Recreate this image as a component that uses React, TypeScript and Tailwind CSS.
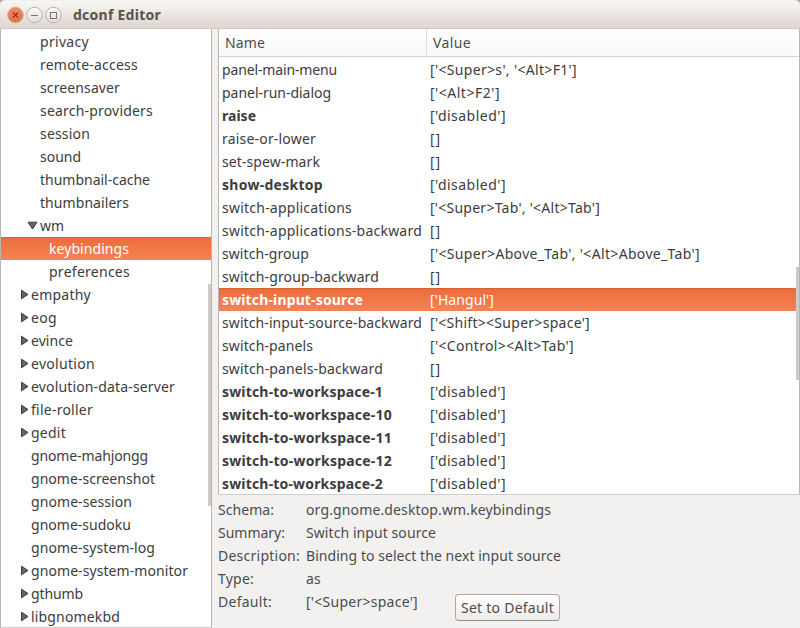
import { useLayoutEffect, useRef, useState } from "react";

/** Text tracked so that it takes exactly `w` pixels. */
function Label({ text, w }: { text: string; w: number }) {
  const ref = useRef<HTMLSpanElement>(null);
  const [spacing, setSpacing] = useState(0);
  useLayoutEffect(() => {
    if (!ref.current) return;
    const natural = ref.current.getBoundingClientRect().width - spacing * text.length;
    setSpacing((w - natural) / text.length);
  }, [text, w]);
  return (
    <span ref={ref} className="inline-block whitespace-pre" style={{ letterSpacing: `${spacing}px` }}>
      {text}
    </span>
  );
}

type Arrow = "open" | "closed" | "";

const tree: [string, number, number, Arrow][] = [
  ["privacy", 49, 3, ""],
  ["remote-access", 98, 3, ""],
  ["screensaver", 80, 3, ""],
  ["search-providers", 113, 3, ""],
  ["session", 50, 3, ""],
  ["sound", 41, 3, ""],
  ["thumbnail-cache", 110, 3, ""],
  ["thumbnailers", 89, 3, ""],
  ["wm", 24, 3, "open"],
  ["keybindings", 80, 4, ""],
  ["preferences", 81, 4, ""],
  ["empathy", 60, 2, "closed"],
  ["eog", 26, 2, "closed"],
  ["evince", 42, 2, "closed"],
  ["evolution", 64, 2, "closed"],
  ["evolution-data-server", 144, 2, "closed"],
  ["file-roller", 62, 2, "closed"],
  ["gedit", 35, 2, "closed"],
  ["gnome-mahjongg", 117, 2, ""],
  ["gnome-screenshot", 124, 2, ""],
  ["gnome-session", 101, 2, ""],
  ["gnome-sudoku", 100, 2, ""],
  ["gnome-system-log", 124, 2, ""],
  ["gnome-system-monitor", 157, 2, "closed"],
  ["gthumb", 52, 2, "closed"],
  ["libgnomekbd", 89, 2, "closed"],
];

const keys: [string, number, string, number, boolean?][] = [
  ["panel-main-menu", 115, "['<Super>s', '<Alt>F1']", 147],
  ["panel-run-dialog", 109, "['<Alt>F2']", 70],
  ["raise", 34, "['disabled']", 76, true],
  ["raise-or-lower", 94, "[]", 11],
  ["set-spew-mark", 98, "[]", 11],
  ["show-desktop", 101, "['disabled']", 76, true],
  ["switch-applications", 130, "['<Super>Tab', '<Alt>Tab']", 170],
  ["switch-applications-backward", 200, "[]", 11],
  ["switch-group", 87, "['<Super>Above_Tab', '<Alt>Above_Tab']", 270],
  ["switch-group-backward", 157, "[]", 11],
  ["switch-input-source", 141, "['Hangul']", 64, true],
  ["switch-input-source-backward", 200, "['<Shift><Super>space']", 160],
  ["switch-panels", 91, "['<Control><Alt>Tab']", 144],
  ["switch-panels-backward", 161, "[]", 11],
  ["switch-to-workspace-1", 161, "['disabled']", 76, true],
  ["switch-to-workspace-10", 170, "['disabled']", 76, true],
  ["switch-to-workspace-11", 170, "['disabled']", 76, true],
  ["switch-to-workspace-12", 170, "['disabled']", 76, true],
  ["switch-to-workspace-2", 161, "['disabled']", 76, true],
];

const details: [string, number, string, number][] = [
  ["Schema:", 56, "org.gnome.desktop.wm.keybindings", 245],
  ["Summary:", 67, "Switch input source", 130],
  ["Description:", 82, "Binding to select the next input source", 255],
  ["Type:", 36, "as", 15],
  ["Default:", 54, "['<Super>space']", 112],
];

const selected = "bg-linear-to-b from-[#ea6c3a] to-[#f68356] text-white shadow-[inset_0_1px_0_#d9622f]";

function Expander({ kind }: { kind: Arrow }) {
  if (kind === "open")
    return (
      <svg className="mr-[2px] h-[9px] w-[11px]" viewBox="0 0 11 9">
        <path d="M1 1.2H10L5.5 8Z" fill="#666" stroke="#3c3c3c" />
      </svg>
    );
  return (
    <svg className="mr-[2px] h-[11px] w-[9px]" viewBox="0 0 9 11">
      <path d="M1.5 1.2V9.8L8 5.5Z" fill="#666" stroke="#3c3c3c" />
    </svg>
  );
}

function TreeRow({ name, w, level, arrow }: { name: string; w: number; level: number; arrow: Arrow }) {
  const pad = level === 2 ? "pl-[30px]" : level === 3 ? "pl-[39px]" : "pl-[48px]";
  const arrowPad = level === 2 ? "pl-[19px]" : "pl-[26px]";
  return (
    <div className={`flex h-[23px] shrink-0 items-center ${arrow ? arrowPad : pad} ${name === "keybindings" ? selected : ""}`}>
      {arrow && <Expander kind={arrow} />}
      <Label text={name} w={w} />
    </div>
  );
}

export default function App() {
  return (
    <div className="flex h-[628px] w-[800px] flex-col overflow-hidden bg-[#f2f1f0] font-['Noto_Sans','Open_Sans',sans-serif] text-[14px] leading-[23px] text-[#3c3c3c]">
      <div className="h-[29px] shrink-0 bg-[#b3aaa7]">
        <header className="flex h-[29px] items-center rounded-t-[5px] border-t border-b border-t-[#f2f0ed] border-b-[#cdc7c0] bg-linear-to-b from-[#f8f7f5] to-[#ded6cf] pl-[7px]">
          <svg className="h-[18px] w-[56px]" viewBox="0 0 56 18" fill="none">
            <defs>
              <linearGradient id="close" x2="0" y2="1">
                <stop stopColor="#f68b64" />
                <stop offset="1" stopColor="#ed6b3e" />
              </linearGradient>
              <linearGradient id="plain" x2="0" y2="1">
                <stop stopColor="#fbfaf9" />
                <stop offset="1" stopColor="#e3ddd8" />
              </linearGradient>
            </defs>
            <circle cx="8.5" cy="9" r="7.8" fill="url(#close)" stroke="#c8aea2" />
            <path d="M6 6.5l5 5m0-5l-5 5" stroke="#763c28" strokeWidth="1.2" />
            <circle cx="27.5" cy="9" r="7.8" fill="url(#plain)" stroke="#b9b2ac" />
            <path d="M24 9.5h7" stroke="#7a746d" />
            <circle cx="46.5" cy="9" r="7.8" fill="url(#plain)" stroke="#b9b2ac" />
            <rect x="43.5" y="6.5" width="6" height="6" stroke="#7a746d" />
          </svg>
          <h1 className="ml-[10px] font-bold text-[#5a534c]">
            <Label text="dconf Editor" w={88} />
          </h1>
        </header>
      </div>
      <div className="flex h-[599px]">
        <nav className="flex w-[212px] shrink-0 overflow-hidden border-x border-b border-x-[#b9b6b3] border-b-[#d0cdca] bg-white">
          <div className="w-full pt-px">
            {tree.map(([name, w, level, arrow]) => (
              <TreeRow key={name} name={name} w={w} level={level} arrow={arrow} />
            ))}
          </div>
          <div className="mt-[255px] -ml-[3px] h-[222px] w-[3px] shrink-0 bg-[#cfcbc9]" />
        </nav>
        <main className="ml-[6px] flex w-[582px] flex-col">
          <section className="flex h-[466px] shrink-0 flex-col overflow-hidden border-x border-b border-x-[#b9b6b3] border-b-[#d0cdca] bg-white">
            <div className="flex h-[28px] shrink-0 border-b border-[#d5d2d0] bg-linear-to-b from-white to-[#f9f9f9] leading-[27px] text-[#4c4c4c]">
              <div className="w-[208px] border-r border-[#dedcda] pl-[6px]">
                <Label text="Name" w={40} />
              </div>
              <div className="pl-[6px]">
                <Label text="Value" w={38} />
              </div>
            </div>
            <div className="flex min-h-0 grow">
              <div className="w-full pt-px">
                {keys.map(([name, nw, value, vw, bold]) => (
                  <div
                    key={name}
                    className={`flex h-[23px] items-center pl-[3px] ${name === "switch-input-source" ? selected + " mr-[3px]" : ""}`}
                  >
                    <div className={`w-[208px] ${bold ? "font-bold" : ""}`}>
                      <Label text={name} w={nw} />
                    </div>
                    <Label text={value} w={vw} />
                  </div>
                ))}
              </div>
              <div className="mt-[210px] -ml-[3px] h-[113px] w-[3px] shrink-0 bg-[#cfcbc9]" />
            </div>
          </section>
          <section className="flex pt-[3px] text-[#4c4c4c]">
            <div className="w-[237px] shrink-0">
              {details.map(([label, lw, value, vw]) => (
                <div key={label} className="flex h-[23px]">
                  <div className="w-[88px] shrink-0">
                    <Label text={label} w={lw} />
                  </div>
                  <Label text={value} w={vw} />
                </div>
              ))}
            </div>
            <button className="mt-[96px] flex h-[27px] w-[105px] shrink-0 items-center justify-center rounded-[4px] border border-[#aaa7a4] border-b-[#918e8b] bg-linear-to-b from-white to-[#eeecea]">
              <Label text="Set to Default" w={93} />
            </button>
          </section>
        </main>
      </div>
    </div>
  );
}
